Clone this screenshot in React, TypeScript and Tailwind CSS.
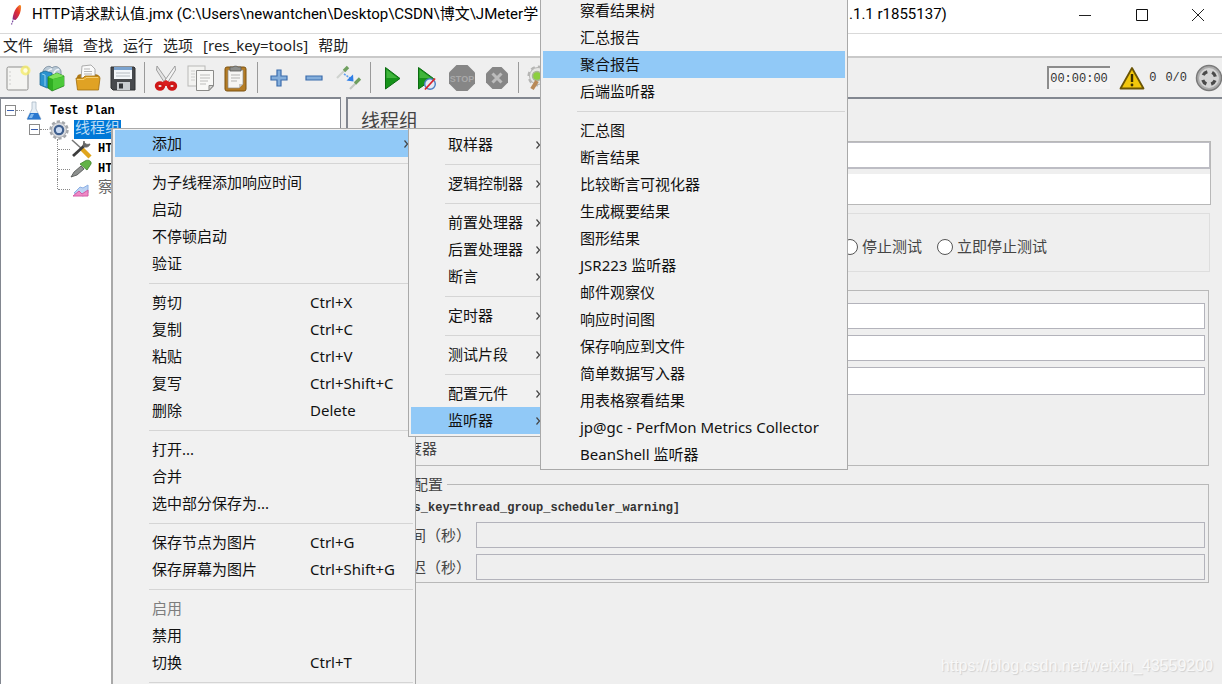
import React from 'react';
import clsx from 'clsx';

type Entry = {
  label?: string;
  keys?: string;
  sub?: boolean;
  active?: boolean;
  disabled?: boolean;
};

const SEP: Entry = {};

const treeMenu: Entry[] = [
  { label: '添加', sub: true, active: true },
  SEP,
  { label: '为子线程添加响应时间' },
  { label: '启动' },
  { label: '不停顿启动' },
  { label: '验证' },
  SEP,
  { label: '剪切', keys: 'Ctrl+X' },
  { label: '复制', keys: 'Ctrl+C' },
  { label: '粘贴', keys: 'Ctrl+V' },
  { label: '复写', keys: 'Ctrl+Shift+C' },
  { label: '删除', keys: 'Delete' },
  SEP,
  { label: '打开...' },
  { label: '合并' },
  { label: '选中部分保存为...' },
  SEP,
  { label: '保存节点为图片', keys: 'Ctrl+G' },
  { label: '保存屏幕为图片', keys: 'Ctrl+Shift+G' },
  SEP,
  { label: '启用', disabled: true },
  { label: '禁用' },
  { label: '切换', keys: 'Ctrl+T' },
  SEP,
];

const addMenu: Entry[] = [
  { label: '取样器', sub: true },
  SEP,
  { label: '逻辑控制器', sub: true },
  SEP,
  { label: '前置处理器', sub: true },
  { label: '后置处理器', sub: true },
  { label: '断言', sub: true },
  SEP,
  { label: '定时器', sub: true },
  SEP,
  { label: '测试片段', sub: true },
  SEP,
  { label: '配置元件', sub: true },
  { label: '监听器', sub: true, active: true },
];

const listenerMenu: Entry[] = [
  { label: '察看结果树' },
  { label: '汇总报告' },
  { label: '聚合报告', active: true },
  { label: '后端监听器' },
  SEP,
  { label: '汇总图' },
  { label: '断言结果' },
  { label: '比较断言可视化器' },
  { label: '生成概要结果' },
  { label: '图形结果' },
  { label: 'JSR223 监听器' },
  { label: '邮件观察仪' },
  { label: '响应时间图' },
  { label: '保存响应到文件' },
  { label: '简单数据写入器' },
  { label: '用表格察看结果' },
  { label: 'jp@gc - PerfMon Metrics Collector' },
  { label: 'BeanShell 监听器' },
];

const PopupMenu: React.FC<{ entries: Entry[]; className: string }> = ({ entries, className }) => (
  <ul
    role="menu"
    className={clsx(
      'absolute border border-[#a9a9a9] bg-[#f1f1f1] px-[2px] text-[15px] leading-[27px] text-[#111]',
      className
    )}
  >
    {entries.map((e, i) =>
      e.label ? (
        <li key={i} role="none">
          <button
            role="menuitem"
            disabled={e.disabled}
            className={clsx(
              'flex h-[27px] w-full items-center pl-[37px] text-left whitespace-nowrap',
              e.active && 'bg-[#91c9f7]',
              e.disabled && 'text-[#7d7d7d]'
            )}
          >
            <span className={clsx(e.keys ? 'w-[158px]' : 'flex-1')}>{e.label}</span>
            {e.keys && <span>{e.keys}</span>}
            {e.sub && (
              <svg width="10" height="10" viewBox="0 0 10 10" fill="none" stroke="#444" strokeWidth="1.2">
                <path d="M1.5 1.5 4.5 5 1.5 8.5" />
              </svg>
            )}
          </button>
        </li>
      ) : (
        <li key={i} role="separator" className="ml-[34px] flex h-3 items-center">
          <span className="h-px w-full bg-[#d5d5d5]" />
        </li>
      )
    )}
  </ul>
);

const FeatherIcon = () => (
  <svg width="16" height="24" viewBox="0 0 16 24">
    <defs>
      <linearGradient id="feather" x1="1" y1="0" x2="0" y2="1">
        <stop offset="0" stopColor="#f69923" />
        <stop offset=".4" stopColor="#e5322d" />
        <stop offset=".8" stopColor="#b4245f" />
        <stop offset="1" stopColor="#5c3b94" />
      </linearGradient>
    </defs>
    <path d="M11.500 2C8 4 5 10 4.500 16.500l3 .5C11 14 13.500 8 13 2.500Z" fill="url(#feather)" />
    <path d="M5 17.500 3.500 21.500" stroke="#7a4aa0" strokeWidth="1.200" strokeDasharray="2 1" />
  </svg>
);

const NewIcon = () => (
  <svg width="26" height="28" viewBox="0 0 26 28">
    <rect x="2" y="3" width="21" height="23" rx="1.500" fill="#f4f4f2" stroke="#8f8f8d" />
    <path d="M4.500 8h1M4.500 12h1M4.500 16h1M4.500 20h1" stroke="#aaa" />
    <circle cx="20.500" cy="6.500" r="5" fill="#f5ec6a" opacity=".8" />
    <circle cx="20.500" cy="6.500" r="2.200" fill="#fffde0" />
  </svg>
);

const TemplatesIcon = () => (
  <svg width="28" height="28" viewBox="0 0 28 28">
    <path d="M4 7c2-5 7-6 9-3 3-3 8-1 9 3v5H4z" fill="#b9c9d6" stroke="#75889a" strokeWidth=".8" />
    <path d="M8 10c0-4 4-5 5-5M15 10c0-4 4-5 5-4" fill="none" stroke="#eef4f8" strokeWidth="1.500" />
    <path d="m1 9 5-2 7 2v14l-5 1-7-3z" fill="#2b93cf" stroke="#14618f" strokeWidth=".7" />
    <path d="m3 10 3 1v11" stroke="#8fd0f0" fill="none" />
    <path d="m9 13 9-4 7 3v10l-12 5-4-3z" fill="#2fae22" stroke="#1c7a16" strokeWidth=".7" />
    <path d="m9 13 5 2 11-3-7-3z" fill="#80e25c" />
    <path d="M14 15v11l11-4.500V12.500z" fill="#4cc93a" />
  </svg>
);

const OpenIcon = () => (
  <svg width="28" height="28" viewBox="0 0 28 28">
    <path d="M3 13c0-2 2-3 5-3h12c3 0 5 1 5 3v6H3z" fill="#b07a18" />
    <path d="m8 2 9-1 4 4v10H7z" fill="#fafafa" stroke="#999" strokeWidth=".8" />
    <path d="M10 5h6M10 7.500h8M10 10h8" stroke="#b5b5b5" />
    <path d="M2 14h7l2-2h14l1 2-1.500 12h-21z" fill="#e0a224" stroke="#a06c0c" strokeWidth=".8" />
    <path d="M3 15.500h7l2-2h12" stroke="#f5cf72" fill="none" />
  </svg>
);

const SaveIcon = () => (
  <svg width="28" height="28" viewBox="0 0 28 28">
    <path d="M2 3h23l1 1v22H4l-2-2z" fill="#47494d" stroke="#2e3033" />
    <path d="M5 3h18v12H5z" fill="#f3f6f9" />
    <path d="M5 3h18v3H5z" fill="#7ba3cf" />
    <path d="M7 9h14M7 12h14" stroke="#b6bcc2" />
    <path d="M8 18h13v8H8z" fill="#c9ccd0" />
    <path d="M10 19.500h4v5h-4z" fill="#34363a" />
  </svg>
);

const CutIcon = () => (
  <svg width="24" height="28" viewBox="0 0 24 28">
    <path d="M3 2 15 19l-3 2L2.500 6z" fill="#e4e4e4" stroke="#8c8c8c" strokeWidth=".8" />
    <path d="M21 2 9 19l3 2L21.500 6z" fill="#f4f4f4" stroke="#8c8c8c" strokeWidth=".8" />
    <ellipse cx="6" cy="22" rx="3.400" ry="2.900" fill="none" stroke="#cf1717" strokeWidth="3.600" />
    <ellipse cx="18" cy="22" rx="3.400" ry="2.900" fill="none" stroke="#cf1717" strokeWidth="3.600" />
    <path d="m7 19 5-3 5 3-4 3h-2z" fill="#d92020" />
  </svg>
);

const CopyIcon = () => (
  <svg width="28" height="28" viewBox="0 0 28 28">
    <rect x="1" y="2" width="17" height="20" fill="#f3f3f1" stroke="#b9b9b7" />
    <path d="M4 7h4M4 10h4M4 13h4M4 16h4" stroke="#cfcfcd" />
    <path d="M9.500 6.500h17V22L22 26.500H9.500z" fill="#f8f8f6" stroke="#8b8b89" />
    <path d="M26.500 21.500H22v5z" fill="#d4d4d2" stroke="#8b8b89" />
    <path d="M13 11h10M13 14h10M13 17h8M13 20h6" stroke="#bcbcba" />
  </svg>
);

const PasteIcon = () => (
  <svg width="26" height="28" viewBox="0 0 26 28">
    <rect x="2" y="3" width="21" height="24" rx="2" fill="#b47c25" stroke="#7c5210" />
    <path d="M5 6h15v14l-4 4H5z" fill="#f6f6f4" stroke="#8d8d8b" strokeWidth=".7" />
    <path d="M20 20h-4v4z" fill="#c8c8c6" />
    <path d="M8 11h9M8 14h9M8 17h6" stroke="#b3b3b1" />
    <path d="M7 3h3a3 2 0 0 1 5 0h3v4H7z" fill="#8d8f8c" stroke="#5a5c59" strokeWidth=".8" />
  </svg>
);

const PlusIcon = () => (
  <svg width="20" height="20" viewBox="0 0 20 20">
    <path d="M8 2h4v6h6v4h-6v6H8v-6H2V8h6z" fill="#84aedb" stroke="#3b6cac" strokeWidth="1.200" />
  </svg>
);

const MinusIcon = () => (
  <svg width="20" height="20" viewBox="0 0 20 20">
    <path d="M2 8h16v4H2z" fill="#84aedb" stroke="#3b6cac" strokeWidth="1.200" />
  </svg>
);

const ToggleIcon = () => (
  <svg width="28" height="28" viewBox="0 0 28 28">
    <path d="m2 14 8-8" stroke="#cfd3cf" strokeWidth="2.200" />
    <path d="m9 7 4-4" stroke="#6f9f5f" strokeWidth="3.400" />
    <path d="m15 25 6-6" stroke="#c4c8c4" strokeWidth="2.200" />
    <path d="m20 19.500 5-5" stroke="#6f9f5f" strokeWidth="3.200" />
    <path d="m9 10 6 4" stroke="#5f9ff0" strokeWidth="1.600" strokeDasharray="2 1" />
    <path d="m18 10.500.5 7-7-1z" fill="#2f7fe8" />
  </svg>
);

const PlayIcon = () => (
  <svg width="20" height="26" viewBox="0 0 20 26">
    <path d="M3.500 2.500 18 13.500 3.500 24z" fill="#16931a" stroke="#0c6b12" />
    <path d="M4.500 4.500 15.500 13h-11z" fill="#40b53c" />
  </svg>
);

const PlayNoPauseIcon = () => (
  <svg width="22" height="26" viewBox="0 0 22 26">
    <path d="M2.500 2.500 17.500 13.500 2.500 24z" fill="#16931a" stroke="#0c6b12" />
    <path d="M3.500 4.500 15 13H3.500z" fill="#40b53c" />
    <circle cx="14" cy="19" r="5.300" fill="#e4ebf5" stroke="#4a7fc4" strokeWidth="1.400" />
    <path d="m9 24.500 10-11" stroke="#d8232a" strokeWidth="1.800" />
  </svg>
);

const StopIcon = () => (
  <svg width="28" height="28" viewBox="0 0 28 28">
    <path d="M8.500 1h11L27 8.500v11L19.500 27h-11L1 19.500v-11z" fill="#868686" />
    <text x="14" y="17.500" textAnchor="middle" fontSize="9" fontWeight="700" fontFamily="Liberation Sans, sans-serif" fill="#a9a9a9">
      STOP
    </text>
  </svg>
);

const ShutdownIcon = () => (
  <svg width="24" height="24" viewBox="0 0 24 24">
    <path d="M7.500 1h9L23 7.500v9L16.500 23h-9L1 16.500v-9z" fill="#868686" />
    <path d="m7.500 7.500 9 9m0-9-9 9" stroke="#bcbcbc" strokeWidth="3" />
  </svg>
);

const SearchIcon = () => (
  <svg width="28" height="28" viewBox="0 0 28 28">
    <circle cx="12" cy="12" r="9" fill="none" stroke="#b5b5b3" strokeWidth="3" strokeDasharray="4 3" />
    <circle cx="12" cy="12" r="8.500" fill="#e6e6e4" stroke="#b5b5b3" />
    <circle cx="11" cy="12" r="4.500" fill="#8ccf3f" stroke="#a9b49a" strokeWidth="1.500" />
    <path d="m11 17-5 8" stroke="#b98a58" strokeWidth="4" />
  </svg>
);

const WarningIcon = () => (
  <svg width="26" height="24" viewBox="0 0 26 24">
    <path d="M13 2 24.500 22.500h-23z" fill="#f2c70c" stroke="#6b5504" strokeWidth="1.800" strokeLinejoin="round" />
    <path d="M13 8v8" stroke="#3b2f02" strokeWidth="2.400" />
    <circle cx="13" cy="19" r="1.400" fill="#3b2f02" />
  </svg>
);

const ThreadsIcon = () => (
  <svg width="27" height="28" viewBox="0 0 27 28">
    <circle cx="14" cy="14" r="12.500" fill="#ababab" stroke="#7a7a7a" strokeWidth="1.500" />
    <circle cx="14" cy="14" r="10" fill="#d4d4d4" />
    <circle cx="14" cy="14" r="6.500" fill="none" stroke="#4a4a4a" strokeWidth="3.200" strokeDasharray="5.200 5" strokeDashoffset="-2.500" />
  </svg>
);

const FlaskIcon = () => (
  <svg width="20" height="20" viewBox="0 0 20 20">
    <path d="M8 1h4v7l5 10H3L8 8z" fill="#e6eef5" stroke="#a9b9c6" strokeWidth=".8" />
    <path d="M6 12h8l3 6.500H3z" fill="#2a78cf" />
    <path d="M7 13h3l-2 4H5z" fill="#7fb8ee" />
  </svg>
);

const GearIcon = () => (
  <svg width="22" height="20" viewBox="0 0 22 20">
    <circle cx="11" cy="10" r="8.400" fill="none" stroke="#a4a7ab" strokeWidth="2.600" strokeDasharray="3.200 2.100" />
    <circle cx="11" cy="10" r="7.500" fill="#d8dade" stroke="#a4a7ab" strokeWidth=".8" />
    <circle cx="11" cy="10" r="4.200" fill="#c9daf2" stroke="#40608f" strokeWidth="2.200" />
  </svg>
);

const ToolsIcon = () => (
  <svg width="22" height="20" viewBox="0 0 22 20">
    <path d="M2 1 12 10" stroke="#777" strokeWidth="1.600" />
    <path d="m12 10 8 8" stroke="#e0a51c" strokeWidth="4.500" />
    <path d="M3 17 15 6" stroke="#3c3c3c" strokeWidth="2.800" />
    <path d="M14 2c0 3 3 4 6 3-1 3-4 4-7 2z" fill="#666" stroke="#666" />
  </svg>
);

const DropperIcon = () => (
  <svg width="22" height="20" viewBox="0 0 22 20">
    <path d="m1 18 3-5 7-6 3 3-7 6z" fill="#8d908e" stroke="#4d4f4e" strokeWidth=".8" />
    <path d="m10 5 5-3c3-2 7 0 6 3l-4 6z" fill="#62b346" stroke="#3c8227" strokeWidth=".8" />
  </svg>
);

const ChartIcon = () => (
  <svg width="22" height="20" viewBox="0 0 22 20">
    <path d="m4 14 6-6 3 1 5-3v8l-5 3z" fill="#bcd3f3" stroke="#8db0e4" />
    <path d="m3 17 6-5 3 3 6-4v6z" fill="#ef8ac6" stroke="#d45aa6" />
  </svg>
);

const toolGroups = [
  [
    { name: '新建', icon: <NewIcon /> },
    { name: '模板', icon: <TemplatesIcon /> },
    { name: '打开', icon: <OpenIcon /> },
    { name: '保存', icon: <SaveIcon /> },
  ],
  [
    { name: '剪切', icon: <CutIcon /> },
    { name: '复制', icon: <CopyIcon /> },
    { name: '粘贴', icon: <PasteIcon /> },
  ],
  [
    { name: '展开', icon: <PlusIcon /> },
    { name: '收起', icon: <MinusIcon /> },
    { name: '切换', icon: <ToggleIcon /> },
  ],
  [
    { name: '启动', icon: <PlayIcon /> },
    { name: '不停顿启动', icon: <PlayNoPauseIcon /> },
    { name: '停止', icon: <StopIcon /> },
    { name: '关闭', icon: <ShutdownIcon /> },
  ],
  [{ name: '查找', icon: <SearchIcon /> }],
];

const TitleBar = () => (
  <header className="flex h-[34px] shrink-0 items-center border-b border-[#d9d9d9] bg-white pb-1 pl-2 font-[Roboto,'Noto_Sans_CJK_SC',sans-serif] text-[15px] text-black">
    <FeatherIcon />
    <h1 className="ml-2 w-[508px] shrink-0 whitespace-nowrap">
      HTTP请求默认值.jmx (C:\Users\newantchen\Desktop\CSDN\博文\JMeter学
    </h1>
    <span className="ml-[309px] flex-1">.1.1 r1855137)</span>
    <div className="flex">
      <button aria-label="最小化" className="flex w-[57px] justify-center">
        <svg width="14" height="14" viewBox="0 0 14 14" stroke="#222"><path d="M1 7.500h12" /></svg>
      </button>
      <button aria-label="最大化" className="flex w-[57px] justify-center">
        <svg width="14" height="14" viewBox="0 0 14 14" stroke="#111" fill="none"><path d="M1.500 1.500h11v11h-11z" /></svg>
      </button>
      <button aria-label="关闭窗口" className="flex w-[52px] justify-center pl-1">
        <svg width="14" height="14" viewBox="0 0 14 14" stroke="#222"><path d="m1 1 12 12M13 1 1 13" /></svg>
      </button>
    </div>
  </header>
);

const MenuBar = () => (
  <nav className="flex h-6 shrink-0 items-center gap-[10px] border-b-2 border-[#c9c9c9] bg-white pl-[3px] text-[15px] leading-5 text-[#222]">
    {['文件', '编辑', '查找', '运行', '选项', '[res_key=tools]', '帮助'].map((m) => (
      <button key={m}>{m}</button>
    ))}
  </nav>
);

const Toolbar = () => (
  <div className="flex h-[39px] shrink-0 items-center text-[#333]">
    {toolGroups.map((group, g) => (
      <React.Fragment key={g}>
        {g > 0 && (
          <span className="flex w-2 justify-center">
            <span className="h-[31px] w-px bg-[#9a9a9a]" />
          </span>
        )}
        {group.map((t) => (
          <button key={t.name} aria-label={t.name} className="flex w-[35px] shrink-0 justify-center">
            {t.icon}
          </button>
        ))}
      </React.Fragment>
    ))}
    <div className="ml-auto flex items-center font-['Liberation_Mono','Noto_Sans_CJK_SC',monospace] text-xs">
      <span className="flex h-[23px] w-[63px] items-center border-t-2 border-l-2 border-[#8c8c8c] bg-[#f4f4f4] pl-px">
        00:00:00
      </span>
      <span className="ml-[9px]">
        <WarningIcon />
      </span>
      <span className="ml-1">0</span>
      <span className="ml-[9px]">0/0</span>
      <button aria-label="线程" className="ml-2">
        <ThreadsIcon />
      </button>
    </div>
  </div>
);

const Handle = () => (
  <button aria-label="折叠" className="flex size-[11px] shrink-0 items-center justify-center border border-[#8a8a8a] bg-white">
    <span className="h-px w-[7px] bg-[#3a5fb0]" />
  </button>
);

const nodes = [
  { id: 'defaults', label: 'HTTP', icon: <ToolsIcon />, style: 'font-bold text-black' },
  { id: 'sampler', label: 'HTTP', icon: <DropperIcon />, style: 'font-bold text-black' },
  { id: 'results', label: '察看', icon: <ChartIcon />, style: 'text-[15px] text-[#666]' },
];

const TestTree = () => (
  <section className="w-[341px] shrink-0 overflow-hidden border-t-2 border-r border-l border-[#828790] bg-white pt-[2px] font-['Liberation_Mono','Noto_Sans_CJK_SC',monospace] text-xs whitespace-nowrap">
    <ul>
      <li>
        <div className="flex h-[19px] items-center pl-1">
          <Handle />
          <span className="w-2 border-t border-dotted border-[#888]" />
          <FlaskIcon />
          <span className="ml-[6px] font-bold text-black">Test Plan</span>
        </div>
        <ul>
          <li>
            <div className="flex h-[19px] items-center pl-7">
              <Handle />
              <span className="w-2 border-t border-dotted border-[#888]" />
              <GearIcon />
              <span className="ml-1 bg-[#0078d7] px-px text-[15px] leading-[19px] text-[#bcdcf5]">线程组</span>
            </div>
            <ul className="pl-14">
              {nodes.map((n, i) => (
                <li key={n.id} className="flex h-5 items-center">
                  <span
                    className={clsx('border-l border-dotted border-[#888]', i === 2 ? 'h-[10px] self-start' : 'h-5')}
                  />
                  <span className="w-3 border-t border-dotted border-[#888]" />
                  {n.icon}
                  <span className={clsx('ml-[6px] leading-5', n.style)}>{n.label}</span>
                </li>
              ))}
            </ul>
          </li>
        </ul>
      </li>
    </ul>
  </section>
);

const field = 'w-full border border-[#b3b3bb] px-1 outline-none';

const ThreadGroupPanel = () => (
  <main className="ml-[5px] min-w-0 flex-1 border-t-2 border-l-2 border-[#828790] pl-[6px] text-[15px] text-[#444]">
    <h2 className="flex h-[42px] items-center pt-[2px] pl-[7px] text-[19px]">线程组</h2>

    <div className="mr-[11px] border border-[#b8b8b8]">
      <input aria-label="名称" className="block h-[27px] w-full border border-b-2 border-[#bdbdc4] bg-white px-1" />
      <input aria-label="注释" className="mt-[5px] block h-[30px] w-full bg-white px-1" />
    </div>

    <div role="radiogroup" className="mt-2 mr-3 flex h-[59px] items-center gap-[15px] border border-[#dedede] pt-2 pl-[487px] whitespace-nowrap">
      {['停止测试', '立即停止测试'].map((r) => (
        <label key={r} className="flex items-center gap-1">
          <input
            type="radio"
            name="on-error"
            className="size-4 appearance-none rounded-full border border-[#555] bg-white"
          />
          {r}
        </label>
      ))}
    </div>

    <div className="mt-[18px] mr-[13px] h-[176px] border border-[#b8b8b8] pt-3 pr-[3px] pl-[121px]">
      <input aria-label="线程数" className={clsx(field, 'block h-[26px] bg-white')} />
      <input aria-label="启动时间" className={clsx(field, 'mt-[6px] block h-[26px] bg-white')} />
      <input aria-label="循环次数" className={clsx(field, 'mt-[6px] block h-7 bg-white')} />
      <label className="-ml-[103px] mt-[43px] flex h-5 items-center gap-1">
        <input type="checkbox" className="size-[15px]" />
        调度器
      </label>
    </div>

    <fieldset className="mt-2 mr-[13px] border border-[#b8b8b8] pr-[3px] pb-[2px]">
      <legend className="ml-[9px] px-1 leading-5">调度器配置</legend>
      <p className="mt-1 pl-[37px] font-['Liberation_Mono','Noto_Sans_CJK_SC',monospace] text-xs leading-5 font-bold text-[#333]">
        [res_key=thread_group_scheduler_warning]
      </p>
      <div className="mt-1 flex flex-col gap-[6px] pl-[41px]">
        {['时间（秒）', '延迟（秒）'].map((l) => (
          <label key={l} className="flex h-[26px] items-center gap-[5px] whitespace-nowrap">
            {l}
            <input disabled className={clsx(field, 'h-full bg-[#efefef]')} />
          </label>
        ))}
      </div>
    </fieldset>
  </main>
);

export default function App() {
  return (
    <div className="relative flex h-screen flex-col overflow-hidden bg-[#efefef] font-['Noto_Sans','Noto_Sans_CJK_SC',sans-serif]">
      <TitleBar />
      <MenuBar />
      <Toolbar />
      <div className="flex min-h-0 flex-1">
        <TestTree />
        <ThreadGroupPanel />
      </div>

      <PopupMenu entries={treeMenu} className="top-32 left-[111px] w-[305px] border-l-2 pt-px pb-2" />
      <PopupMenu entries={addMenu} className="top-32 left-[408px] w-[140px] pt-[2px] pb-[2px]" />
      <PopupMenu entries={listenerMenu} className="-top-[9px] left-[540px] w-[308px] pt-[5px] pb-px" />

      <footer className="absolute right-[9px] bottom-[6px] font-['Liberation_Sans',sans-serif] text-base text-[#f8f8f8] [text-shadow:1px_1px_1px_#d0d0d0]">
        https://blog.csdn.net/weixin_43559200
      </footer>
    </div>
  );
}
